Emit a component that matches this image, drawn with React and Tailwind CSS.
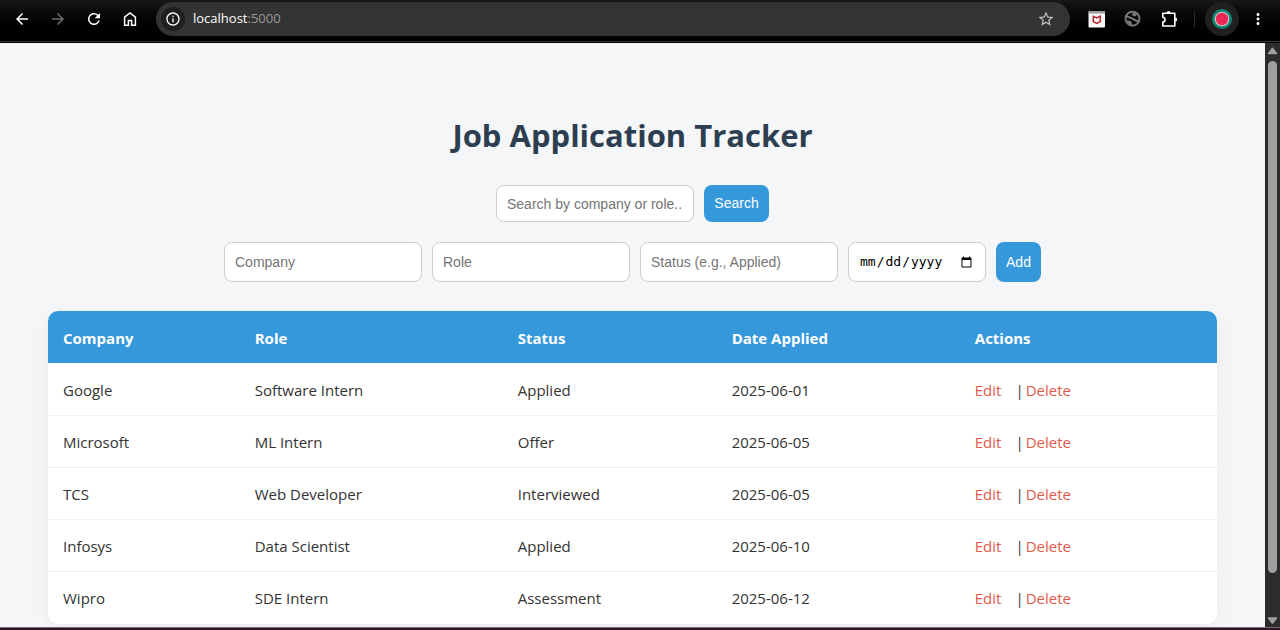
import React from "react";
import { MdArrowBack, MdArrowForward, MdRefresh, MdInfoOutline, MdStarOutline, MdMoreVert } from "react-icons/md";

const applications = [
  { company: "Google", role: "Software Intern", status: "Applied", date: "2025-06-01" },
  { company: "Microsoft", role: "ML Intern", status: "Offer", date: "2025-06-05" },
  { company: "TCS", role: "Web Developer", status: "Interviewed", date: "2025-06-05" },
  { company: "Infosys", role: "Data Scientist", status: "Applied", date: "2025-06-10" },
  { company: "Wipro", role: "SDE Intern", status: "Assessment", date: "2025-06-12" },
];

const fieldClass =
  "rounded-lg border border-[#cccccc] bg-white px-[10px] font-['Liberation_Sans',sans-serif] text-[14px] placeholder:text-[#757575] placeholder:opacity-100";
const buttonClass =
  "rounded-lg bg-[#3498db] px-[10px] font-['Liberation_Sans',sans-serif] text-[14px] text-white";

function HomeIcon() {
  return (
    <svg viewBox="0 0 18 18" className="size-[18px]" fill="none" stroke="currentColor" strokeWidth="1.5">
      <path d="M3.6 15.2V7.2L9 3l5.4 4.2v8h-3.8v-4.8H7.4v4.8z" />
    </svg>
  );
}

function ShieldIcon() {
  return (
    <svg viewBox="0 0 18 18" className="size-[18px]">
      <rect x="0.5" y="1" width="16.5" height="16.5" rx="1" fill="#f8f8f8" />
      <path d="M.5 2a1 1 0 0 1 1-1H16a1 1 0 0 1 1 1v1.5H.5z" fill="#9a9a9a" />
      <path d="M5.3 6.3L8.8 8l3.5-1.7v5.2l-3.5 1.9-3.5-1.9z" fill="none" stroke="#b5272d" strokeWidth="1.5" />
    </svg>
  );
}

function BlockedGlobeIcon() {
  return (
    <svg viewBox="0 0 18 18" className="size-[18px]" fill="none" stroke="#777777">
      <circle cx="8.5" cy="8.7" r="7" strokeWidth="1.9" />
      <path d="M2 6.2l6 2.2 6.800 3.600" strokeWidth="2" />
      <path d="M9.500 2.200l4.500 1.800-3 2.500-3.500-1.500z" fill="#777777" stroke="none" />
      <path d="M2.500 10l4.500 1.200 1.500 4-3.500-.8z" fill="#777777" stroke="none" />
    </svg>
  );
}

function PuzzleIcon() {
  return (
    <svg viewBox="0 0 18 18" className="size-[18px]" fill="none" stroke="currentColor" strokeWidth="1.6" strokeLinejoin="round">
      <path d="M2.8 3.2h12v12.8h-12v-3.9c3-.3 3-4.5 0-4.8z" />
      <path d="M6.6 3a2 2 0 0 1 4 0zM15.2 7.5a2 2 0 0 1 0 4z" fill="currentColor" stroke="none" />
    </svg>
  );
}

function ProfileIcon() {
  return (
    <svg viewBox="0 0 20 20" className="size-5">
      <circle cx="10" cy="10" r="10" fill="#128475" />
      <circle cx="10" cy="10" r="7.3" fill="#d9c6c4" />
      <circle cx="10" cy="10" r="6.2" fill="#ee2857" />
      <g fill="#a91e45">
        <circle cx="7.5" cy="8" r=".5" />
        <circle cx="12.5" cy="8" r=".5" />
        <circle cx="10" cy="6" r=".5" />
        <circle cx="8" cy="12.5" r=".5" />
        <circle cx="12" cy="12.5" r=".5" />
      </g>
    </svg>
  );
}

function BrowserBar() {
  return (
    <header className="flex h-[43px] shrink-0 items-start border-b border-black bg-black">
      <div className="flex h-[42px] w-full items-start border-b border-[#333333] bg-linear-to-b from-[#171717] to-black pt-[2px] pr-[13px] pl-[13px] text-white">
        <nav className="flex h-[34px] items-center gap-[18px]">
          <button aria-label="Back"><MdArrowBack className="size-[18px]" /></button>
          <button aria-label="Forward" className="text-[#6b6b6b]"><MdArrowForward className="size-[18px]" /></button>
          <button aria-label="Reload"><MdRefresh className="size-[18px]" /></button>
          <button aria-label="Home"><HomeIcon /></button>
        </nav>
        <div className="ml-[17px] flex h-[34px] flex-1 items-center rounded-full bg-[#333333] pr-[15px] pl-[5px]">
          <button aria-label="Site information" className="flex size-6 items-center justify-center rounded-full bg-[#1f1f1f]">
            <MdInfoOutline className="size-4" />
          </button>
          <p className="ml-2 flex-1 font-['Open_Sans',sans-serif] text-[13px]">
            localhost<span className="text-[#9a9a9a]">:5000</span>
          </p>
          <button aria-label="Bookmark" className="text-[#c4c4c4]"><MdStarOutline className="size-[18px]" /></button>
        </div>
        <div className="flex h-[34px] items-center gap-[18px] pl-[18px]">
          <button aria-label="Shield"><ShieldIcon /></button>
          <button aria-label="Web tools"><BlockedGlobeIcon /></button>
          <button aria-label="Extensions"><PuzzleIcon /></button>
        </div>
        <div className="mt-[9px] ml-4 h-4 w-px bg-[#2a2a2a]" />
        <button aria-label="Profile" className="ml-[10px] flex size-[34px] items-center justify-center rounded-full bg-[#202020]">
          <ProfileIcon />
        </button>
        <button aria-label="Menu" className="ml-[10px] flex h-[34px] items-center"><MdMoreVert className="size-[18px]" /></button>
      </div>
    </header>
  );
}

function ScrollTrack() {
  return (
    <div className="flex w-[15px] shrink-0 flex-col items-center bg-[#2c2c2c] text-[#9f9f9f]" aria-hidden="true">
      <svg viewBox="0 0 15 18" className="h-[18px] w-[15px] shrink-0" fill="currentColor"><path d="M7.5 4.5q.5 0 1 .7l3.7 5q.5 1-.5 1H3.3q-1 0-.5-1l3.7-5q.5-.7 1-.7z" /></svg>
      <div className="flex w-full flex-1 flex-col items-center">
        <div className="h-[93%] w-[9px] rounded-full bg-[#9f9f9f]" />
      </div>
      <svg viewBox="0 0 15 15" className="size-[15px] shrink-0" fill="currentColor"><path d="M7.5 12q-.5 0-1-.7l-3.7-5q-.5-1 .5-1h8.400q1 0 .5 1l-3.700 5q-.5.7-1 .7z" /></svg>
    </div>
  );
}

export default function App() {
  return (
    <div className="flex h-screen flex-col overflow-hidden">
      <BrowserBar />
      <div className="flex min-h-0 flex-1">
        <main className="min-w-0 flex-1 overflow-hidden bg-[#f4f6f8] px-12 pt-[71px] font-['Open_Sans',sans-serif] text-[15px] text-[#333333]">
          <h1 className="text-center text-[31px] leading-[43px] font-bold text-[#2c3e50]">Job Application Tracker</h1>
          <form className="mt-7 flex justify-center gap-[10px]" onSubmit={(e) => e.preventDefault()}>
            <input aria-label="Search by company or role" placeholder="Search by company or role..." className={`${fieldClass} h-[37px] w-[198px]`} />
            <button className={`${buttonClass} h-[37px] w-[65px]`}>Search</button>
          </form>
          <form className="mt-5 flex justify-center gap-[10px]" onSubmit={(e) => e.preventDefault()}>
            <input aria-label="Company" placeholder="Company" className={`${fieldClass} h-10 w-[198px]`} />
            <input aria-label="Role" placeholder="Role" className={`${fieldClass} h-10 w-[198px]`} />
            <input aria-label="Status" placeholder="Status (e.g., Applied)" className={`${fieldClass} h-10 w-[198px]`} />
            <input
              type="date"
              aria-label="Date applied"
              className="h-10 w-[138px] rounded-lg border border-[#cccccc] bg-white px-[10px] font-['DejaVu_Sans_Mono',monospace] text-[13px] text-black"
            />
            <button className={`${buttonClass} h-10 w-[45px]`}>Add</button>
          </form>
          <div className="mt-[29px] overflow-hidden rounded-[10px] bg-white shadow-[0_4px_20px_rgba(0,0,0,0.05)]">
            <table className="w-full table-fixed text-left">
              <colgroup>
                <col className="w-[16.4%]" />
                <col className="w-[22.5%]" />
                <col className="w-[18.3%]" />
                <col className="w-[20.8%]" />
                <col className="w-[22%]" />
              </colgroup>
              <thead className="bg-[#3498db] text-white">
                <tr className="h-[52px]">
                  {["Company", "Role", "Status", "Date Applied", "Actions"].map((name) => (
                    <th key={name} scope="col" className="px-[15px] pt-[2px] font-bold">{name}</th>
                  ))}
                </tr>
              </thead>
              <tbody>
                {applications.map((app) => (
                  <tr key={app.company} className="h-[52px] border-b border-[#f2f2f2] last:border-transparent">
                    <td className="px-[15px] pt-[3px]">{app.company}</td>
                    <td className="px-[15px] pt-[3px]">{app.role}</td>
                    <td className="px-[15px] pt-[3px]">{app.status}</td>
                    <td className="px-[15px] pt-[3px]">{app.date}</td>
                    <td className="px-[15px] pt-[3px]">
                      <a href="#edit" className="mr-[14px] text-[#e05a4c]">Edit</a>
                      <span>|</span>
                      <a href="#delete" className="ml-[2px] text-[#e05a4c]">Delete</a>
                    </td>
                  </tr>
                ))}
              </tbody>
            </table>
          </div>
        </main>
        <ScrollTrack />
      </div>
      <div className="h-[3px] shrink-0 border-t border-[#806c78] bg-[#2c1424]" />
    </div>
  );
}
